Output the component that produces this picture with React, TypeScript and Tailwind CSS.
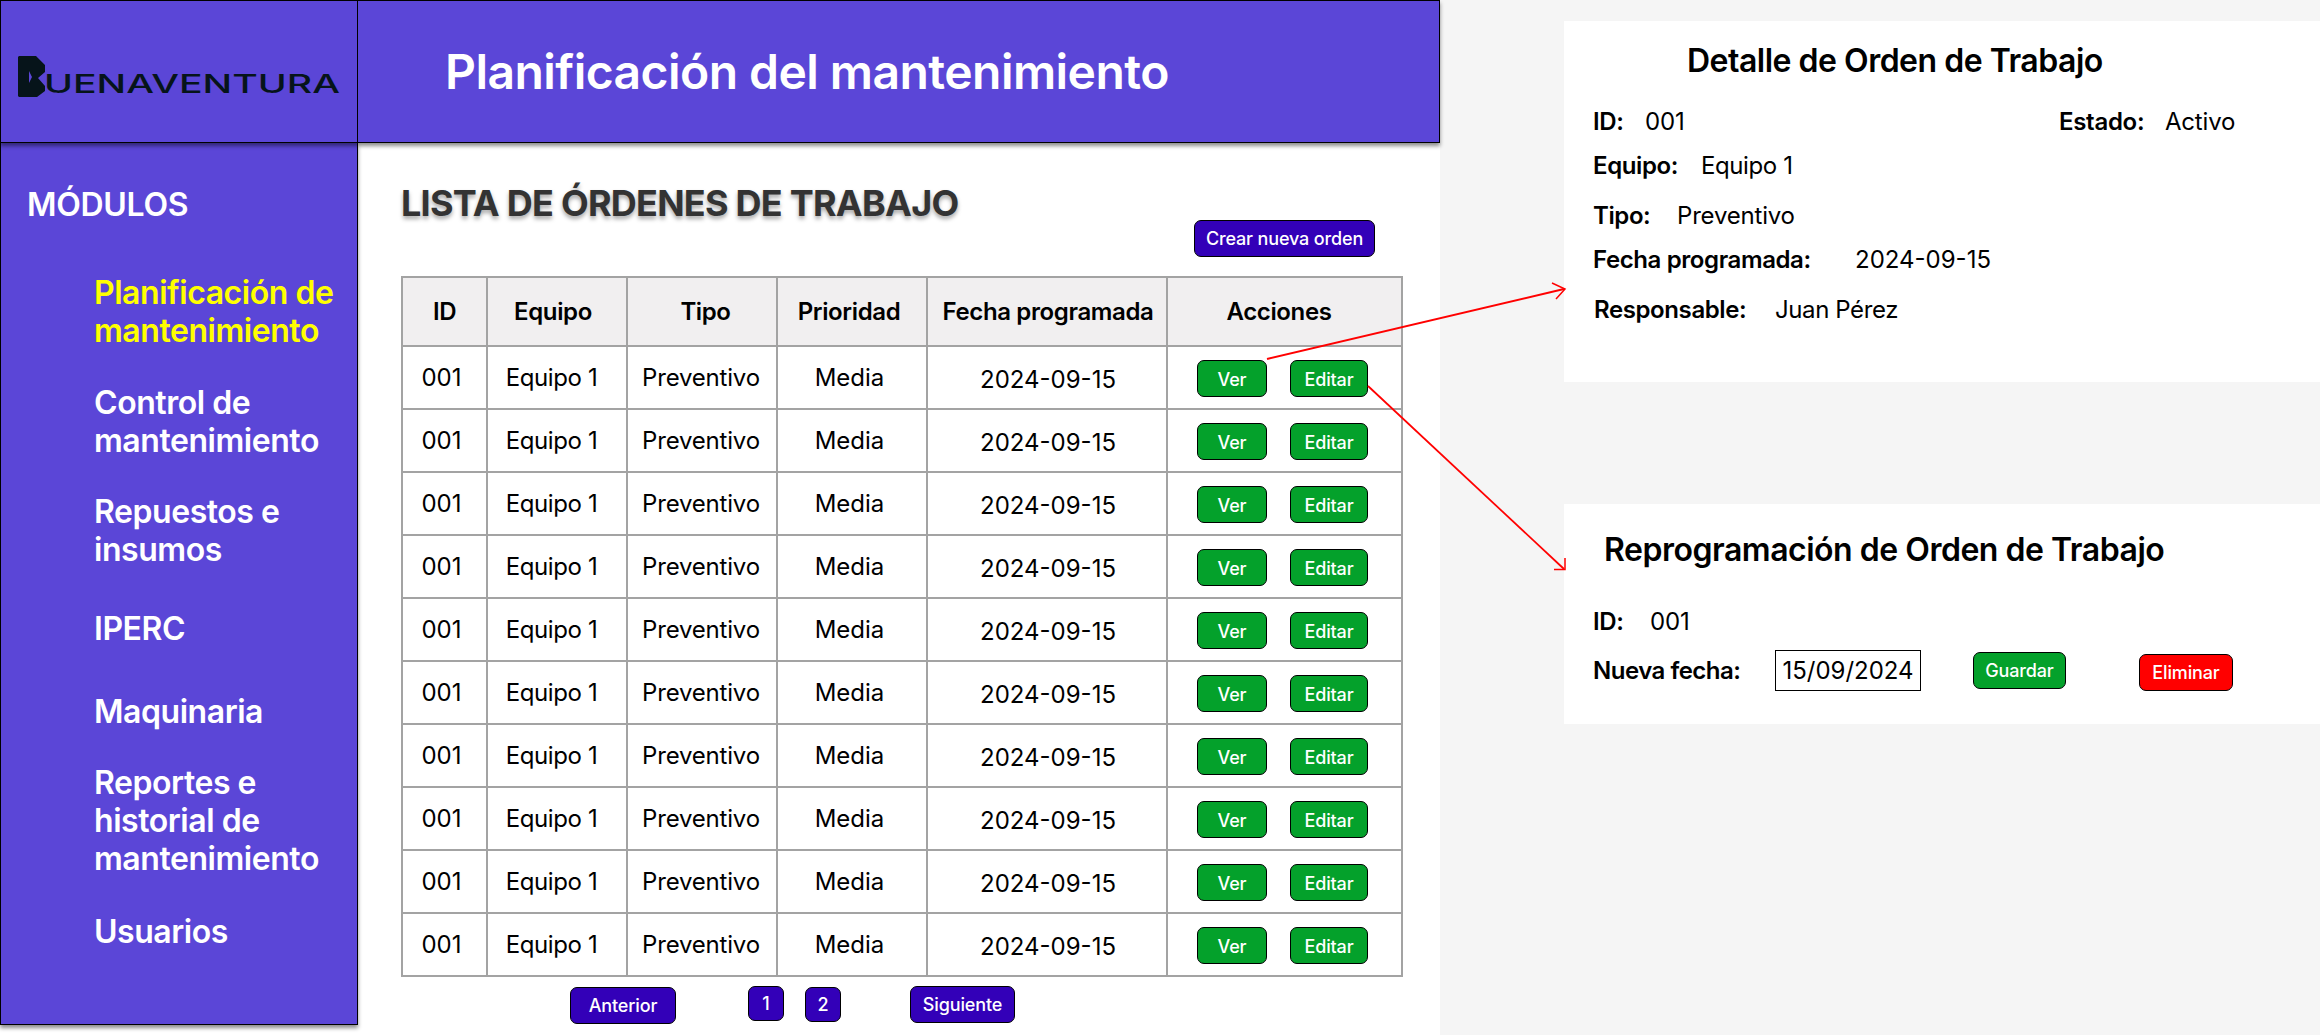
import React from 'react';

const rows = Array.from({ length: 10 });

const navItems = [
  { label: ['Planificación de', 'mantenimiento'], cls: 'mt-[50px] text-[#ffff00]' },
  { label: ['Control de', 'mantenimiento'], cls: 'mt-[34px] text-white' },
  { label: ['Repuestos e', 'insumos'], cls: 'mt-[33px] text-white' },
  { label: ['IPERC'], cls: 'mt-[41px] text-white' },
  { label: ['Maquinaria'], cls: 'mt-[45px] text-white' },
  { label: ['Reportes e', 'historial de', 'mantenimiento'], cls: 'mt-[33px] text-white' },
  { label: ['Usuarios'], cls: 'mt-[35px] text-white' },
];

const headers = [
  { label: 'ID', cls: '' },
  { label: 'Equipo', cls: 'pr-[8px]' },
  { label: 'Tipo', cls: 'pl-[7px]' },
  { label: 'Prioridad', cls: 'pr-[6px]' },
  { label: 'Fecha programada', cls: 'pl-[2px]' },
  { label: 'Acciones', cls: 'pr-[11px]' },
];

const Logo = () => (
  <svg width="330" height="50" viewBox="0 0 330 50" className="block">
    <path
      fill="#06141a"
      fillRule="evenodd"
      d="M0 1L1 0H18L27 9V16L20 22L27 30V35L19 41H1L0 40ZM11 15L14 21L11 27Z"
    />
    <text
      x="26"
      y="37"
      fontFamily="Inter, sans-serif"
      fontSize="25"
      fontWeight="500"
      fill="#06141a"
      textLength="296"
      lengthAdjust="spacingAndGlyphs"
    >
      UENAVENTURA
    </text>
  </svg>
);

const Arrows = () => (
  <svg width="2320" height="1035" className="absolute left-0 top-0 pointer-events-none">
    <g fill="none" stroke="#ff0000">
      <path strokeWidth="2" d="M1267 359L1564 289" />
      <path strokeWidth="1.5" d="M1552 283L1565 289L1556 299" />
      <path strokeWidth="1.75" d="M1368 386L1564 569" />
      <path strokeWidth="1.5" d="M1554 569.5H1565V558" />
    </g>
  </svg>
);

export default function App() {
  return (
    <div className="relative flex w-[2320px] h-[1035px] overflow-hidden bg-[#f5f5f5] font-['Inter',sans-serif] text-black">
      {/* Left app mock */}
      <div className="w-[1440px] h-full flex flex-col bg-white">
        <div className="flex h-[143px] shrink-0 shadow-[0_3px_4px_rgba(0,0,0,0.45)] z-10">
          <div className="w-[358px] bg-[#5b46d7] border border-black flex items-start pl-[17px] pt-[55px]">
            <Logo />
          </div>
          <div className="flex-1 bg-[#5b46d7] border border-l-0 border-black pl-[87px] pt-[41px]">
            <h1 className="text-[48px] leading-[60px] tracking-[-0.55px] font-semibold text-white">Planificación del mantenimiento</h1>
          </div>
        </div>

        <div className="flex flex-1 min-h-0">
          <aside className="w-[358px] h-[882px] bg-[#5b46d7] border-x border-b border-black shadow-[0_3px_4px_rgba(0,0,0,0.45)] pl-[26px] pt-[43px]">
            <div className="text-[32px] leading-[38px] tracking-[-0.3px] font-semibold text-white">MÓDULOS</div>
            <nav className="pl-[67px]">
              {navItems.map((item) => (
                <div key={item.label[0]} className={`text-[32px] leading-[38px] tracking-[-0.45px] font-semibold ${item.cls}`}>
                  {item.label.map((line) => (
                    <div key={line}>{line}</div>
                  ))}
                </div>
              ))}
            </nav>
          </aside>

          <main className="flex-1 pl-[43px] pt-[38px]">
            <h2 className="text-[36px] leading-[44px] tracking-[-0.75px] font-bold text-[#333333] [text-shadow:0_3px_4px_rgba(0,0,0,0.35)]">
              LISTA DE ÓRDENES DE TRABAJO
            </h2>
            <div className="flex justify-end pr-[65px] -mt-[5px]">
              <button className="w-[181px] h-[37px] rounded-[7px] border border-black bg-[#3300b8] text-white text-[18px] tracking-[-0.15px] font-medium">
                Crear nueva orden
              </button>
            </div>
            <table className="mt-[19px] w-[1000px] table-fixed border-collapse text-[24px]">
              <colgroup>
                <col className="w-[85px]" />
                <col className="w-[140px]" />
                <col className="w-[150px]" />
                <col className="w-[150px]" />
                <col className="w-[240px]" />
                <col className="w-[235px]" />
              </colgroup>
              <thead>
                <tr className="h-[69px] bg-[#f1eff0]">
                  {headers.map((h) => (
                    <th key={h.label} className={`border-2 border-[#a3a3a3] font-semibold tracking-[-0.37px] text-center p-0 ${h.cls}`}>
                      {h.label}
                    </th>
                  ))}
                </tr>
              </thead>
              <tbody>
                {rows.map((_, i) => (
                  <tr key={i} className="h-[63px]">
                    <td className="border-2 border-[#a3a3a3] text-center p-0 pr-[6px]">001</td>
                    <td className="border-2 border-[#a3a3a3] text-center p-0 pr-[11px] tracking-[-0.4px]">Equipo 1</td>
                    <td className="border-2 border-[#a3a3a3] text-center p-0 pr-[2px] tracking-[-0.2px]">Preventivo</td>
                    <td className="border-2 border-[#a3a3a3] text-center p-0 pr-[5px]">Media</td>
                    <td className="border-2 border-[#a3a3a3] text-center p-0 pt-1 pl-[2px]">2024-09-15</td>
                    <td className="border-2 border-[#a3a3a3] p-0">
                      <div className="flex pl-[29px] gap-[23px] pt-[2px]">
                        <button className="w-[70px] h-[37px] rounded-[7px] border border-black bg-[#04a12b] text-white text-[18px] tracking-[-0.15px] font-medium pt-[2px]">
                          Ver
                        </button>
                        <button className="w-[78px] h-[37px] rounded-[7px] border border-black bg-[#04a12b] text-white text-[18px] tracking-[-0.15px] font-medium pt-[2px]">
                          Editar
                        </button>
                      </div>
                    </td>
                  </tr>
                ))}
              </tbody>
            </table>
            <div className="flex items-start pl-[169px] mt-[10px] text-white text-[18px] tracking-[-0.15px] font-medium">
              <button className="w-[106px] h-[37px] rounded-[7px] border border-black bg-[#3300b8]">Anterior</button>
              <button className="w-[36px] h-[35px] rounded-[7px] border border-black bg-[#3300b8] ml-[72px] -mt-[1px]">1</button>
              <button className="w-[36px] h-[35px] rounded-[7px] border border-black bg-[#3300b8] ml-[21px]">2</button>
              <button className="w-[105px] h-[37px] rounded-[7px] border border-black bg-[#3300b8] ml-[69px] -mt-[1px]">Siguiente</button>
            </div>
          </main>
        </div>
      </div>

      {/* Right detail cards */}
      <div className="flex-1 pl-[124px] pt-[21px]">
        <section className="h-[361px] bg-white pl-[29px] text-[24px]">
          <h3 className="pl-[94px] pt-[20px] text-[32px] leading-[40px] tracking-[-0.5px] font-semibold">Detalle de Orden de Trabajo</h3>
          <div className="flex mt-[26px] h-[30px] items-center">
            <b className="font-semibold tracking-[-0.4px] w-[52px]">ID:</b>
            <span className="w-[414px] tracking-[-0.2px]">001</span>
            <b className="font-semibold tracking-[-0.3px] w-[106px]">Estado:</b>
            <span className="tracking-[-0.2px]">Activo</span>
          </div>
          <div className="flex mt-[14px] h-[30px] items-center">
            <b className="font-semibold tracking-[-0.4px] w-[108px]">Equipo:</b>
            <span className="tracking-[-0.4px]">Equipo 1</span>
          </div>
          <div className="flex mt-[20px] h-[30px] items-center">
            <b className="font-semibold tracking-[-0.4px] w-[84px]">Tipo:</b>
            <span className="tracking-[-0.2px]">Preventivo</span>
          </div>
          <div className="flex mt-[14px] h-[30px] items-center">
            <b className="font-semibold tracking-[-0.4px] w-[262px]">Fecha programada:</b>
            <span>2024-09-15</span>
          </div>
          <div className="flex mt-[20px] h-[30px] items-center pl-[1px]">
            <b className="font-semibold tracking-[-0.4px] w-[181px]">Responsable:</b>
            <span className="tracking-[-0.4px]">Juan Pérez</span>
          </div>
        </section>

        <section className="mt-[122px] h-[220px] bg-white pl-[29px] text-[24px]">
          <h3 className="pl-[11px] pt-[26px] text-[32px] leading-[40px] tracking-[-0.48px] font-semibold">Reprogramación de Orden de Trabajo</h3>
          <div className="flex mt-[37px] h-[30px] items-center">
            <b className="font-semibold tracking-[-0.4px] w-[57px]">ID:</b>
            <span className="tracking-[-0.2px]">001</span>
          </div>
          <div className="flex mt-[13px] items-start">
            <b className="font-semibold tracking-[-0.5px] w-[182px] leading-[41px]">Nueva fecha:</b>
            <div className="w-[146px] h-[41px] border-[1.5px] border-black flex items-center justify-center">15/09/2024</div>
            <button className="w-[93px] h-[37px] ml-[52px] mt-[2px] rounded-[7px] border border-black bg-[#04a12b] text-white text-[18px] tracking-[-0.15px] font-medium">
              Guardar
            </button>
            <button className="w-[94px] h-[37px] ml-[73px] mt-[4px] rounded-[7px] border border-black bg-[#ff0000] text-white text-[18px] tracking-[-0.15px] font-medium">
              Eliminar
            </button>
          </div>
        </section>
      </div>

      <Arrows />
    </div>
  );
}
